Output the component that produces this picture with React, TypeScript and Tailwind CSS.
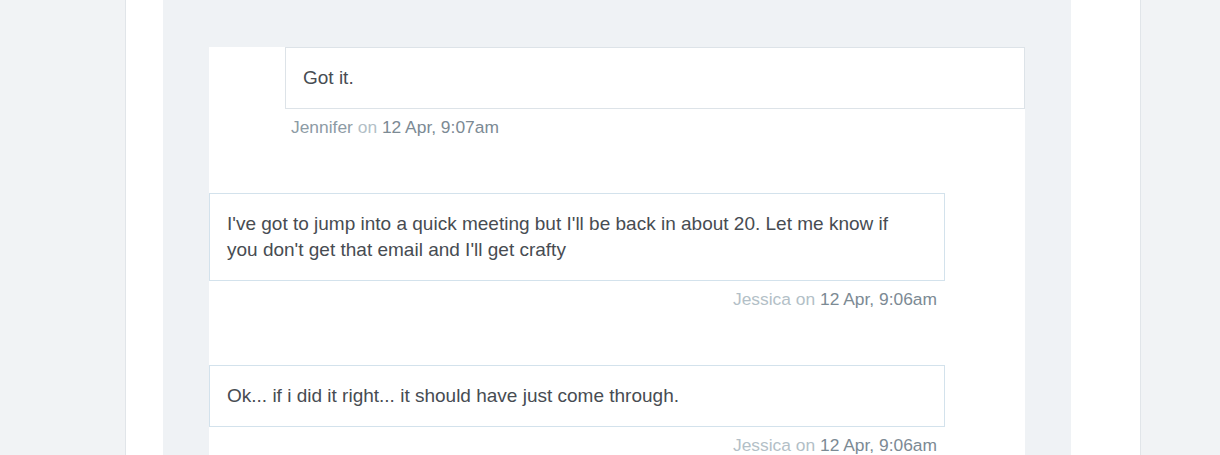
const messages = [
  {
    id: 1,
    mine: true,
    author: "Jennifer",
    time: "12 Apr, 9:07am",
    text: "Got it.",
  },
  {
    id: 2,
    mine: false,
    author: "Jessica",
    time: "12 Apr, 9:06am",
    text: "I've got to jump into a quick meeting but I'll be back in about 20. Let me know if you don't get that email and I'll get crafty",
  },
  {
    id: 3,
    mine: false,
    author: "Jessica",
    time: "12 Apr, 9:06am",
    text: "Ok... if i did it right... it should have just come through.",
  },
];

const Message = ({ mine, author, time, text }: (typeof messages)[number]) => {
  return (
    <div className={mine ? "pl-[76px]" : "pr-[80px]"}>
      <div
        className={`bg-white border pl-[17px] pr-[40px] py-[17px] text-[19px] leading-[26px] text-[#474c52] ${
          mine ? "border-[#dde3e8]" : "border-[#d3e2ec]"
        }`}
      >
        {text}
      </div>
      <div
        className={`mt-[8px] text-[17.4px] leading-[20px] ${
          mine ? "pl-[6px] text-left" : "pr-[8px] text-right"
        }`}
      >
        <span className={mine ? "text-[#8d9ba5]" : "text-[#b3bfc7]"}>
          {author}
        </span>
        <span className="text-[#b3bfc7]"> on </span>
        <span className="text-[#7c8a94]">{time}</span>
      </div>
    </div>
  );
};

export default function App() {
  return (
    <div
      className="h-[455px] overflow-hidden bg-[#f1f3f5] flex"
      style={{ fontFamily: '"Liberation Sans", Arial, sans-serif' }}
    >
      <div className="ml-[125px] w-[1016px] h-full bg-white border-x border-[#e1e5e9] pl-[37px] pr-[69px]">
        <div className="h-full bg-[#eff2f5] pl-[46px] pr-[46px] pt-[47px]">
          <div className="h-full bg-white flex flex-col gap-[56px]">
            {messages.map((m) => (
              <Message key={m.id} {...m} />
            ))}
          </div>
        </div>
      </div>
    </div>
  );
}
